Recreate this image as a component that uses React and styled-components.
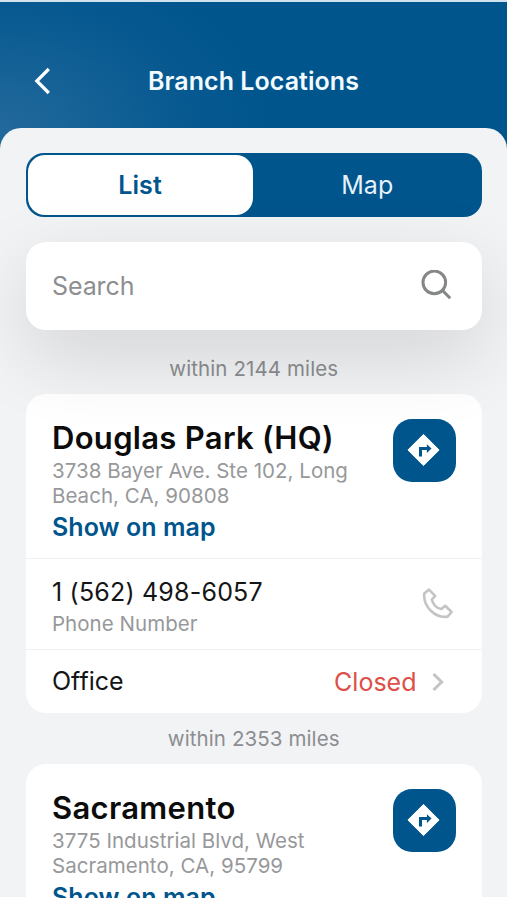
import React from 'react';
import styled, { createGlobalStyle } from 'styled-components';

const GlobalStyle = createGlobalStyle`
  * { box-sizing: border-box; }
  body { margin: 0; background: #fff; font-family: Inter, sans-serif; }
`;

const BLUE = '#00558d';

const Screen = styled.div`
  height: 898px;
  overflow: hidden;
  display: flex;
  flex-direction: column;
  border-top: 2px solid #d3e3ee;
  background: radial-gradient(ellipse 270px 175px at 0 125px, #22699c 0%, #085a91 65%, ${BLUE} 100%), ${BLUE};
`;

const Header = styled.header`
  flex: none;
  height: 126px;
  padding: 31px 33px 0;
  display: grid;
  grid-template-columns: 40px 1fr 40px;
  align-items: center;
`;

const BackButton = styled.button`
  display: flex;
  padding: 0;
  border: 0;
  background: none;
  color: #fff;
`;

const Title = styled.h1`
  margin: 0;
  text-align: center;
  font-size: 25px;
  line-height: 30px;
  font-weight: 600;
  letter-spacing: 0.05px;
  color: #f2fbff;
`;

const Sheet = styled.main`
  flex: 1;
  min-height: 0;
  padding: 25px 25.5px 0 26px;
  border-radius: 21px 21px 0 0;
  background: linear-gradient(to top, #fff 1px, #f2f3f5 1px);
  overflow: hidden;
`;

const Segments = styled.div`
  display: grid;
  grid-template-columns: 225px 1fr;
  height: 63.5px;
  padding: 1.5px;
  border-radius: 18px;
  background: ${BLUE};
`;

const Segment = styled.button`
  padding: 0 0 0 ${(p) => (p.$active ? 0 : 2)}px;
  border: 0;
  border-radius: 17px;
  background: ${(p) => (p.$active ? '#fff' : 'transparent')};
  color: ${(p) => (p.$active ? BLUE : '#e6f1f8')};
  font: ${(p) => (p.$active ? 600 : 400)} 25px/30px Inter, sans-serif;
  letter-spacing: 0.1px;
`;

const SearchBox = styled.label`
  position: relative;
  z-index: 1;
  display: flex;
  align-items: center;
  justify-content: space-between;
  height: 88.5px;
  margin-top: 25px;
  padding: 0 29px 0 26px;
  border-radius: 20px;
  background: #fff;
  box-shadow: 0 26px 78px rgba(0, 0, 0, 0.13);
  color: #858688;
`;

const SearchInput = styled.input`
  width: 300px;
  padding: 1px 0 0;
  border: 0;
  outline: 0;
  background: none;
  font: 400 25px/30px Inter, sans-serif;
  letter-spacing: -0.1px;
  &::placeholder { color: #8d8e90; opacity: 1; }
`;

const Distance = styled.p`
  margin: 0;
  padding-top: ${(p) => p.$pad}px;
  height: ${(p) => p.$height}px;
  text-align: center;
  font-size: 20.5px;
  line-height: 26px;
  letter-spacing: 0.1px;
  color: #8c8d91;
`;

const Card = styled.article`
  border-radius: 20px;
  background: #fff;
  overflow: hidden;
`;

const Place = styled.section`
  display: flex;
  justify-content: space-between;
  height: 164px;
  padding: 25px 26px 0 26px;
`;

const PlaceName = styled.h2`
  margin: 0;
  font-size: 31px;
  line-height: 38px;
  font-weight: 600;
  letter-spacing: 0.3px;
  color: #0c0c0d;
`;

const Muted = styled.div`
  font-size: 20.5px;
  line-height: 25.5px;
  letter-spacing: 0.03px;
  color: #97989a;
  white-space: nowrap;
`;

const Address = styled.div`
  padding-top: 0.5px;
`;

const MapLink = styled.a`
  display: block;
  padding-top: 3.5px;
  font-size: 25px;
  line-height: 30px;
  font-weight: 600;
  letter-spacing: 0.05px;
  color: ${BLUE};
`;

const DirectionsButton = styled.button`
  display: flex;
  align-items: center;
  justify-content: center;
  flex: none;
  width: 63px;
  height: 63px;
  padding: 0 0 1px;
  border: 0;
  border-radius: 19px;
  background: ${BLUE};
`;

const Row = styled.div`
  display: flex;
  align-items: center;
  justify-content: space-between;
  height: ${(p) => p.$height}px;
  padding: 0 ${(p) => p.$right}px 0 26px;
  border-top: 1px solid #eff0f1;
`;

const PhoneText = styled.div`
  display: flex;
  flex-direction: column;
  gap: 2px;
  padding-top: 5px;
`;

const Value = styled.div`
  font-size: 25px;
  line-height: 33px;
  letter-spacing: ${(p) => p.$spacing ?? 0}px;
  color: #151516;
`;

const Status = styled.span`
  display: flex;
  align-items: center;
  gap: 14.5px;
  font-size: 25px;
  line-height: 30px;
  color: #dc5048;
`;

const BackIcon = () => (
  <svg width="18" height="28" viewBox="0 0 18 28" fill="none" stroke="currentColor" strokeWidth="3.2">
    <path d="M15.8 2 L3.8 14 L15.8 26" />
  </svg>
);

const SearchIcon = () => (
  <svg width="32" height="32" viewBox="0 0 32 32" fill="none" stroke="currentColor" strokeWidth="3">
    <circle cx="13.3" cy="12.4" r="11.3" />
    <path d="M21.4 20.4 L29.2 28.2" />
  </svg>
);

const DirectionsIcon = () => (
  <svg width="34" height="34" viewBox="0 0 34 34">
    <path d="M16.5 1.4 L32.1 17 L16.5 32.6 L0.9 17 Z" fill="#fff" stroke="#fff" strokeLinejoin="round" />
    <path d="M13.5 23.5 V15.6 H21.5" fill="none" stroke={BLUE} strokeWidth="3" />
    <path d="M19.9 11.2 L24.5 15.6 L19.9 20 Z" fill={BLUE} />
  </svg>
);

const PhoneIcon = () => (
  <svg width="32" height="32" viewBox="0 0 32 32" fill="none" stroke="#c3c4c6" strokeWidth="2.6" strokeLinejoin="round">
    <path d="M2.3 5.6 L7 1.6 L13.2 7.8 L9.9 11.5 C10.6 16.2 14.6 20.4 19.4 21 L23.2 17.8 L29.6 24 L25.6 28.7 C13.3 30.5 1 18.8 2.3 5.6 Z" />
  </svg>
);

const ChevronIcon = () => (
  <svg width="14" height="20" viewBox="0 0 14 20" fill="none" stroke="#c3c4c6" strokeWidth="3">
    <path d="M2.5 2 L10.7 10 L2.5 18" />
  </svg>
);

const branches = [
  {
    name: 'Douglas Park (HQ)',
    distance: 'within 2144 miles',
    address: ['3738 Bayer Ave. Ste 102, Long', 'Beach, CA, 90808'],
    phone: '1 (562) 498-6057',
    labelPad: 26,
    labelHeight: 64,
  },
  {
    name: 'Sacramento',
    distance: 'within 2353 miles',
    address: ['3775 Industrial Blvd, West', 'Sacramento, CA, 95799'],
    labelPad: 13,
    labelHeight: 51,
  },
];

const Branch = ({ branch }) => (
  <>
    <Distance $pad={branch.labelPad} $height={branch.labelHeight}>{branch.distance}</Distance>
    <Card>
      <Place>
        <div>
          <PlaceName>{branch.name}</PlaceName>
          <Address>
            {branch.address.map((line) => <Muted key={line}>{line}</Muted>)}
          </Address>
          <MapLink>Show on map</MapLink>
        </div>
        <DirectionsButton aria-label="Directions"><DirectionsIcon /></DirectionsButton>
      </Place>
      {branch.phone && (
        <>
          <Row $height={91} $right={28}>
            <PhoneText>
              <Value $spacing={0.2}>{branch.phone}</Value>
              <Muted>Phone Number</Muted>
            </PhoneText>
            <PhoneIcon />
          </Row>
          <Row $height={64} $right={36.5}>
            <Value>Office</Value>
            <Status>Closed <ChevronIcon /></Status>
          </Row>
        </>
      )}
    </Card>
  </>
);

export default function App() {
  return (
    <>
      <GlobalStyle />
      <Screen>
        <Header>
          <BackButton aria-label="Back"><BackIcon /></BackButton>
          <Title>Branch Locations</Title>
        </Header>
        <Sheet>
          <Segments>
            <Segment $active>List</Segment>
            <Segment>Map</Segment>
          </Segments>
          <SearchBox>
            <SearchInput placeholder="Search" />
            <SearchIcon />
          </SearchBox>
          {branches.map((branch) => <Branch key={branch.name} branch={branch} />)}
        </Sheet>
      </Screen>
    </>
  );
}
